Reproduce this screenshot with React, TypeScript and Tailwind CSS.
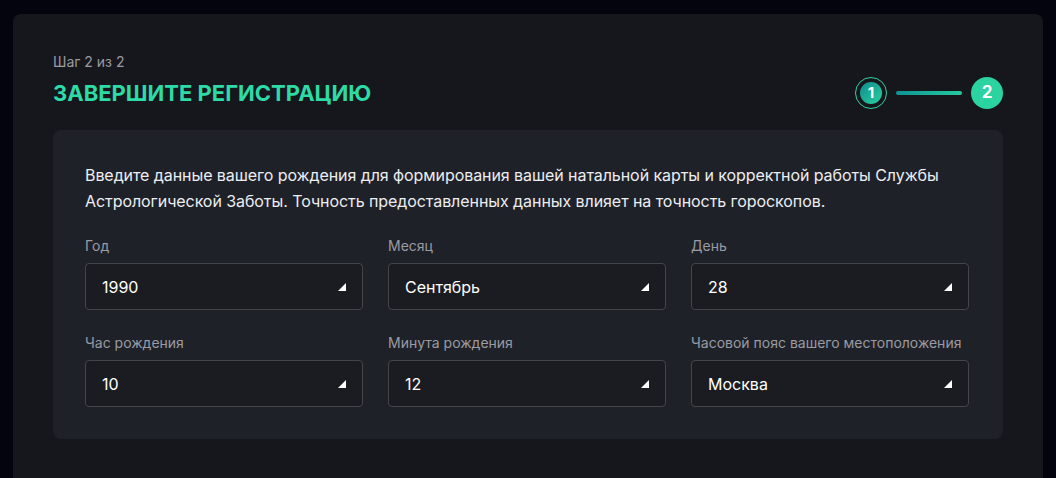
import { useState } from 'react';

type Field = { label: string; value: string };

const fields: Field[] = [
  { label: 'Год', value: '1990' },
  { label: 'Месяц', value: 'Сентябрь' },
  { label: 'День', value: '28' },
  { label: 'Час рождения', value: '10' },
  { label: 'Минута рождения', value: '12' },
  { label: 'Часовой пояс вашего местоположения', value: 'Москва' },
];

// Small corner triangle used as the select caret
function Caret() {
  return (
    <svg width="8" height="8" viewBox="0 0 8 8" className="shrink-0">
      <path d="M8 0 L8 8 L0 8 Z" fill="#ffffff" />
    </svg>
  );
}

function SelectBox({ label, value }: Field) {
  return (
    <div className="flex flex-col">
      <span className="text-[14px] leading-4 text-[#9a9ba3] mb-[9px] whitespace-nowrap">{label}</span>
      <div className="h-[47px] flex items-center justify-between pl-[16px] pr-[16px] rounded-[4px] border border-[#44454b] bg-[#1b1c21] cursor-pointer">
        <span className="text-[16px] text-white">{value}</span>
        <Caret />
      </div>
    </div>
  );
}

function Stepper() {
  return (
    <div className="flex items-center">
      {/* Step 1: done, ringed */}
      <div className="w-[32px] h-[32px] rounded-full border border-[#2ad3a0] flex items-center justify-center">
        <div className="w-[22px] h-[22px] rounded-full bg-gradient-to-br from-[#0f8a8c] to-[#2ad3a0] flex items-center justify-center text-white text-[15px] font-bold">
          1
        </div>
      </div>
      <div className="w-[66px] h-[4px] mx-[9px] rounded-full bg-gradient-to-r from-[#0e9492] to-[#26c9a0]" />
      {/* Step 2: current */}
      <div className="w-[32px] h-[32px] rounded-full bg-[#2ad3a0] flex items-center justify-center text-white text-[17px] font-bold">
        2
      </div>
    </div>
  );
}

export default function App() {
  const [step] = useState(2);

  return (
    <div className="min-h-screen bg-[#03040e] pt-[14px] px-[13px] font-['Inter','Noto_Sans',sans-serif] antialiased">
      <div className="bg-[#16161d] rounded-t-[8px] px-[40px] pt-[40px] pb-[40px] min-h-[464px]">
        <div className="text-[14px] leading-4 text-[#9a9ba3]">Шаг {step} из 2</div>
        <div className="mt-[7px] flex items-center justify-between">
          <h1 className="text-[22px] leading-6 font-bold text-[#2ddba6]">ЗАВЕРШИТЕ РЕГИСТРАЦИЮ</h1>
          <Stepper />
        </div>

        <div className="mt-[21px] bg-[#1f2128] rounded-[8px] px-[32px] pt-[32px] pb-[32px]">
          <p className="text-[16px] leading-[26px] tracking-[-0.07px] text-[#eceef2]">
            Введите данные вашего рождения для формирования вашей натальной карты и корректной работы Службы
            Астрологической Заботы. Точность предоставленных данных влияет на точность гороскопов.
          </p>
          <div className="mt-[24px] grid grid-cols-[278px_278px_278px] gap-x-[25px] gap-y-[25px]">
            {fields.map((f) => (
              <SelectBox key={f.label} label={f.label} value={f.value} />
            ))}
          </div>
        </div>
      </div>
    </div>
  );
}
